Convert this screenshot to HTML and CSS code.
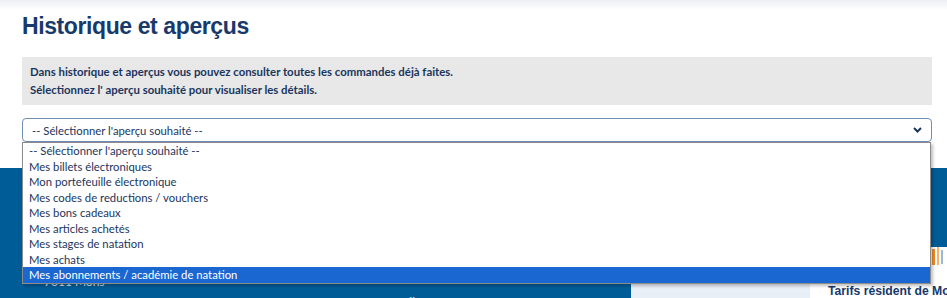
FILE: index.html
```html
<!DOCTYPE html>
<html lang="fr">
<head>
    <meta charset="UTF-8">
    <meta name="viewport" content="width=device-width, initial-scale=1.0">
    <title>Historique et aperçus</title>
    <link rel="stylesheet" href="styles.css">
</head>
<body>
    <main class="content">
        <h1>Historique et aperçus</h1>

        <div class="intro">
            <p>Dans historique et aperçus vous pouvez consulter toutes les commandes déjà faites.</p>
            <p>Sélectionnez l' aperçu souhaité pour visualiser les détails.</p>
        </div>

        <!-- Select with its list open -->
        <div class="picker">
            <div class="select">
                <span>-- Sélectionner l'aperçu souhaité --</span>
                <svg class="chevron" width="9" height="6" viewBox="0 0 9 6">
                    <path d="M1 1l3.5 3.5L8 1" fill="none" stroke="#1b365d" stroke-width="2"/>
                </svg>
            </div>
            <ul class="options">
                <li>-- Sélectionner l'aperçu souhaité --</li>
                <li>Mes billets électroniques</li>
                <li>Mon portefeuille électronique</li>
                <li>Mes codes de reductions / vouchers</li>
                <li>Mes bons cadeaux</li>
                <li>Mes articles achetés</li>
                <li>Mes stages de natation</li>
                <li>Mes achats</li>
                <li class="active">Mes abonnements / académie de natation</li>
            </ul>
        </div>
    </main>

    <footer>
        <div class="col contact">
            <p>Piscine du Grand Large</p>
            <p>Avenue du Grand Large 1</p>
            <p>7011 Mons</p>
            <p>+32 65 33 00 20</p>
        </div>
        <div class="col links">
            <p>Contact</p>
        </div>
        <div class="col links">
            <p>Portail café</p>
        </div>
        <aside class="promo">
            <div class="promo-side"></div>
            <div class="promo-card">
                <svg class="promo-img" width="137" height="30" viewBox="0 0 137 30">
                    <rect x="122" y="2" width="3" height="16" fill="#f28c28"/>
                    <rect x="127" y="0" width="2" height="18" fill="#f7b267"/>
                    <rect x="131" y="3" width="2" height="14" fill="#9bb8d8"/>
                </svg>
                <h3>Tarifs résident de Mons</h3>
            </div>
        </aside>
    </footer>
</body>
</html>
```

FILE: styles.css
```css
body {
    margin: 0;
    font-family: 'Lato', 'Open Sans', sans-serif;
    background: linear-gradient(#eceef2, #ffffff 10px) no-repeat;
    overflow: hidden;
}

/* Main block */
.content {
    padding: 0 15px 0 22px;
}

h1 {
    margin: 12px 0 17px;
    font-family: 'Liberation Sans', Arial, sans-serif;
    font-size: 23px;
    letter-spacing: -0.4px;
    line-height: 28px;
    color: #17396b;
}

.intro {
    background-color: #e8e8e8;
    padding: 6px 8px;
}

.intro p {
    margin: 0;
    font-size: 11.4px;
    line-height: 18px;
    font-weight: bold;
    color: #1b365d;
}

/* Select box */
.picker {
    position: relative;
    margin-top: 13px;
}

.select {
    box-sizing: border-box;
    height: 24px;
    border: 1px solid #6f8db5;
    border-radius: 4px;
    padding: 0 9px;
    display: flex;
    align-items: center;
    justify-content: space-between;
    font-size: 11.3px;
    color: #1b365d;
}

.options {
    position: absolute;
    top: 100%;
    left: 0;
    width: 909px;
    box-sizing: border-box;
    margin: 0;
    padding: 0;
    list-style: none;
    background-color: #ffffff;
    border: 1px solid #8c8c8c;
    box-shadow: 2px 2px 3px rgba(0, 0, 0, 0.25);
    z-index: 5;
}

.options li {
    height: 15.5px;
    line-height: 15.5px;
    padding-left: 6px;
    font-size: 11.3px;
    color: #1b365d;
}

.options li.active {
    background-color: #1a67d2;
    color: #ffffff;
}

/* Footer */
footer {
    margin-top: 26px;
    background-color: #005c97;
    min-height: 160px;
    display: flex;
    color: #dfe8f1;
    font-size: 12px;
}

.col p {
    margin: 0;
    line-height: 20px;
}

.contact {
    width: 213px;
    padding: 64px 0 0 44px;
}

.links {
    width: 124px;
    padding-top: 124px;
}

.promo {
    display: flex;
    margin-left: auto;
    margin-top: 79px;
    width: 316px;
    flex-shrink: 0;
}

.promo-side {
    width: 179px;
    flex-shrink: 0;
    background-color: #e9eff6;
}

.promo-card {
    width: 160px;
    flex-shrink: 0;
    background-color: #ffffff;
    padding-left: 18px;
}

.promo-img {
    display: block;
    margin-left: -18px;
}

.promo-card h3 {
    margin: 7px 0 0;
    font-family: 'Liberation Sans', Arial, sans-serif;
    font-size: 12.2px;
    line-height: 15px;
    white-space: nowrap;
    color: #17396b;
}
```
